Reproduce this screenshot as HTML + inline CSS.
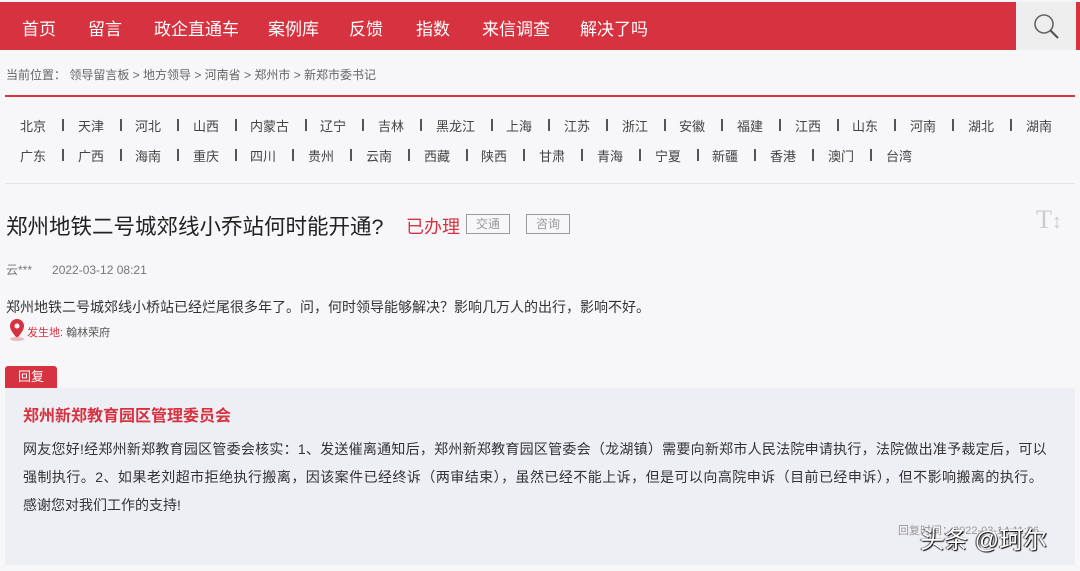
<!DOCTYPE html>
<html><head><meta charset="utf-8"><style>
*{margin:0;padding:0;box-sizing:border-box}
body{width:1080px;height:571px;background:#f7f6f9;font-family:"Liberation Sans","Noto Sans CJK SC",sans-serif;position:relative;overflow:hidden;color:#333}
.a{position:absolute;white-space:nowrap}
.nav{position:absolute;left:0;top:2px;width:1016px;height:48px;background:#d7323f}
.nav span{position:absolute;top:13px;color:#fff;font-size:17px}
.srch{position:absolute;left:1016px;top:2px;width:60px;height:48px;background:#eeeeee}
.red2{position:absolute;left:1076px;top:2px;width:4px;height:48px;background:#d7323f}
.p{font-size:13px;color:#444}
.body{font-size:14px;color:#333}
</style></head><body>
<div class="nav">
<span style="left:22px">首页</span><span style="left:88px">留言</span><span style="left:154px">政企直通车</span><span style="left:268px">案例库</span><span style="left:349px">反馈</span><span style="left:416px">指数</span><span style="left:482px">来信调查</span><span style="left:580px">解决了吗</span>
</div>
<div class="srch"><svg width="60" height="48"><circle cx="28" cy="22" r="9" fill="none" stroke="#666" stroke-width="1.6"/><line x1="34.5" y1="28.5" x2="42" y2="36" stroke="#555" stroke-width="2.2"/></svg></div>
<div class="red2"></div>
<div class="a" style="left:6px;top:66px;font-size:12px;color:#666">当前位置：  领导留言板 &gt; 地方领导 &gt; 河南省 &gt; 郑州市 &gt; 新郑市委书记</div>
<div class="a" style="left:5px;top:95px;width:1070px;height:2px;background:#d7323f"></div>
<div id="r1"></div>
<div class="a" style="left:5px;top:183px;width:1070px;height:1px;background:#e4e4e8"></div>
<div class="a" style="left:6px;top:210px;font-size:21.5px;color:#222">郑州地铁二号城郊线小乔站何时能开通?</div>
<div class="a" style="left:406px;top:213px;font-size:18px;color:#d7323f">已办理</div>
<div class="a" style="left:466px;top:214px;width:44px;height:20px;border:1px solid #999;font-size:12px;color:#999;text-align:center;line-height:18px">交通</div>
<div class="a" style="left:526px;top:214px;width:44px;height:20px;border:1px solid #999;font-size:12px;color:#999;text-align:center;line-height:18px">咨询</div>
<div class="a" style="left:1036px;top:205px;font-size:26px;color:#ccc;font-family:'Liberation Serif',serif">T<span style="font-size:20px">↕</span></div>
<div class="a" style="left:6px;top:261px;font-size:12px;color:#777">云***&nbsp;&nbsp;&nbsp;&nbsp;&nbsp;&nbsp;2022-03-12 08:21</div>
<div class="a body" style="left:6px;top:297px">郑州地铁二号城郊线小桥站已经烂尾很多年了。问，何时领导能够解决？影响几万人的出行，影响不好。</div>
<svg class="a" style="left:7px;top:318px" width="20" height="24"><path d="M10 1a7 7 0 0 0-7 7c0 5 7 12 7 12s7-7 7-12a7 7 0 0 0-7-7z" fill="#d7323f"/><circle cx="10" cy="8" r="2.5" fill="#fff"/><ellipse cx="10" cy="21" rx="7" ry="2" fill="#f0b8bd"/></svg>
<div class="a" style="left:27px;top:324px;font-size:11px;color:#d7323f">发生地: <span style="color:#555">翰林荣府</span></div>
<div class="a" style="left:5px;top:366px;width:52px;height:22px;background:#d7323f;border-radius:3px 3px 0 0;color:#fff;font-size:13px;line-height:22px;text-align:center">回复</div>
<div class="a" style="left:5px;top:388px;width:1070px;height:177px;background:#eeeff5"></div>
<div class="a" style="left:23px;top:402px;font-size:16px;font-weight:bold;color:#d7323f">郑州新郑教育园区管理委员会</div>
<div class="a body" style="left:23px;top:439px;letter-spacing:0.25px">网友您好!经郑州新郑教育园区管委会核实：1、发送催离通知后，郑州新郑教育园区管委会（龙湖镇）需要向新郑市人民法院申请执行，法院做出准予裁定后，可以</div>
<div class="a body" style="left:23px;top:467px;letter-spacing:0.45px">强制执行。2、如果老刘超市拒绝执行搬离，因该案件已经终诉（两审结束），虽然已经不能上诉，但是可以向高院申诉（目前已经申诉），但不影响搬离的执行。</div>
<div class="a body" style="left:23px;top:495px">感谢您对我们工作的支持!</div>
<div class="a" style="left:898px;top:522px;font-size:11px;color:#999">回复时间：2022-03-14 11:36</div>
<div class="a" style="left:920px;top:520px;font-size:24px;color:#fff;text-shadow:1px 1px 1px #000,-1px 0 1px #333">头条 @珂尔</div>
<script>
var r1=[["北京",20],["天津",78],["河北",135],["山西",193],["内蒙古",250],["辽宁",320],["吉林",378],["黑龙江",436],["上海",506],["江苏",564],["浙江",622],["安徽",679],["福建",737],["江西",795],["山东",852],["河南",910],["湖北",968],["湖南",1026]];
var r2=[["广东",20],["广西",78],["海南",135],["重庆",193],["四川",250],["贵州",308],["云南",366],["西藏",424],["陕西",481],["甘肃",539],["青海",597],["宁夏",655],["新疆",712],["香港",770],["澳门",828],["台湾",886]];
var h="";
function row(r,y){for(var i=0;i<r.length;i++){h+='<div class="a p" style="left:'+r[i][1]+'px;top:'+y+'px">'+r[i][0]+'</div>';if(i<r.length-1){var w=r[i][0].length*13;var x=(r[i][1]+w+r[i+1][1])/2;h+='<div class="a" style="left:'+Math.round(x)+'px;top:'+(y+3)+'px;width:1.5px;height:12px;background:#555"></div>';}}}
row(r1,116);row(r2,146);
document.getElementById("r1").outerHTML=h;
</script>
</body></html>
